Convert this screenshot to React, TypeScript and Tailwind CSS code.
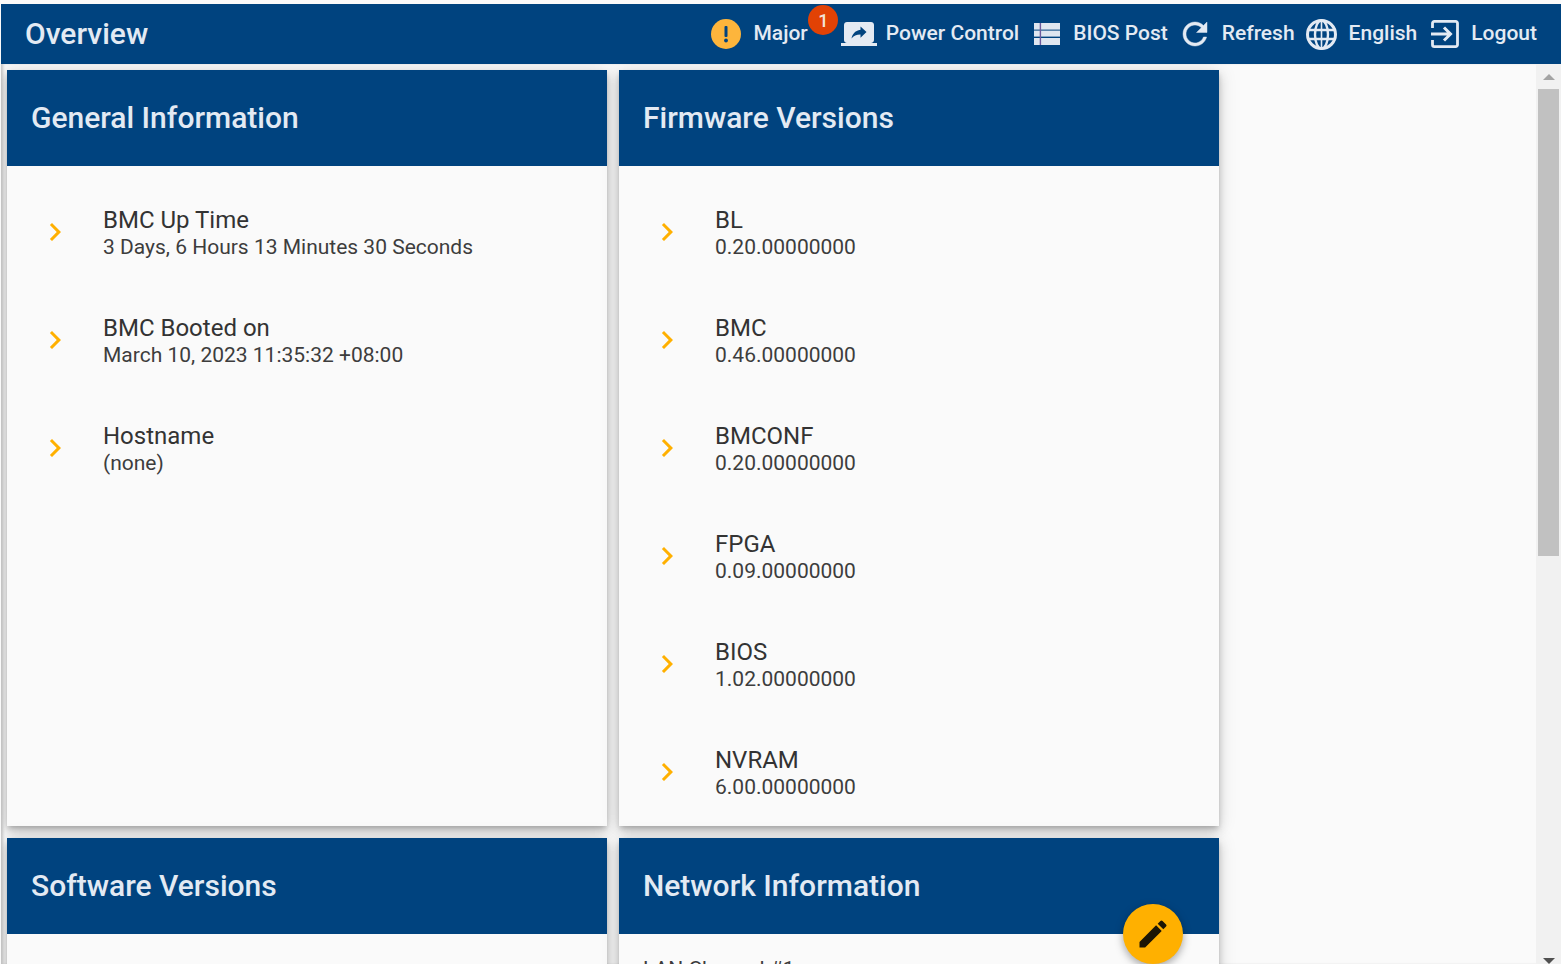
const Arrow = () => (
  <svg viewBox="0 0 24 24" className="w-[36px] h-[36px] shrink-0" fill="#ffb000">
    <path d="M10 6 8.59 7.41 13.17 12l-4.58 4.59L10 18l6-6z" />
  </svg>
);

const Row = ({ a, b }: { a: string; b: string }) => (
  <div className="h-[108px] flex items-center pl-[30px]">
    <Arrow />
    <div className="ml-[30px] pt-[2px]">
      <div className="text-[24px] leading-[28px] text-[#333333]">{a}</div>
      <div className="text-[21px] leading-[26px] text-[#3d3d3d]">{b}</div>
    </div>
  </div>
);

const Card = ({ title, children, h }: { title: string; children?: React.ReactNode; h: string }) => (
  <section className={`w-[600px] ${h} bg-[#fafafa] shadow-[0_3px_5px_-1px_rgba(0,0,0,0.2),0_6px_10px_0_rgba(0,0,0,0.14),0_1px_18px_0_rgba(0,0,0,0.12)] shrink-0`}>
    <h2 className="h-[96px] bg-[#00437f] text-[#e3eaf3] text-[30px] font-medium flex items-center pl-[24px] pb-[2px]">{title}</h2>
    {children}
  </section>
);

const Label = ({ text, ml }: { text: string; ml: string }) => (
  <span className={`${ml} text-[21px] font-medium text-[#e3eaf3]`}>{text}</span>
);

export default function App() {
  return (
    <div className="h-[964px] w-[1561px] overflow-hidden bg-[#fafafa] pt-[4px] pl-[1px] flex flex-col font-['Roboto',sans-serif]">
      <header className="h-[60px] shrink-0 bg-[#00437f] flex items-center pl-[24px] pr-[24px] justify-between">
        <h1 className="text-[30px] font-medium text-[#e3eaf3] pb-[2px]">Overview</h1>
        <div className="flex items-center">
          <div className="relative flex items-center">
            <svg viewBox="0 0 30 30" className="w-[30px] h-[30px]">
              <circle cx="15" cy="15" r="15" fill="#fdb53c" />
              <rect x="13.5" y="7" width="3" height="11" rx="1" fill="#00437f" />
              <circle cx="15" cy="21.5" r="1.9" fill="#00437f" />
            </svg>
            <Label text="Major" ml="ml-[12px]" />
            <span className="absolute left-[97px] top-[-13px] w-[30px] h-[30px] rounded-full bg-[#e24205] text-[#f3e3d8] text-[18px] font-medium flex items-center justify-center">1</span>
          </div>
          <div className="ml-[33px] flex items-center">
            <svg viewBox="0 0 24 24" className="w-[36px] h-[36px]" fill="#e3eaf3"><path d="M20 18c1.1 0 1.99-.9 1.99-2L22 6c0-1.11-.9-2-2-2H4c-1.11 0-2 .89-2 2v10c0 1.1.89 2 2 2H0v2h24v-2h-4zm-7-3.53v-2.19c-2.78 0-4.61.85-6 2.72.56-2.67 2.11-5.33 6-5.87V7l4 3.73-4 3.74z" /></svg>
            <Label text="Power Control" ml="ml-[9px]" />
          </div>
          <div className="ml-[15px] flex items-center">
            <svg viewBox="0 0 26 22" className="w-[26px] h-[22px]" fill="#dfe6f0">
              <rect x="0" y="0" width="26" height="6.6" />
              <rect x="0" y="7.6" width="26" height="6" />
              <rect x="0" y="15" width="26" height="7" />
              <rect x="5.7" y="0" width="1.4" height="22" fill="#6c5a9c" />
            </svg>
            <Label text="BIOS Post" ml="ml-[13px]" />
          </div>
          <div className="ml-[9px] flex items-center">
            <svg viewBox="0 0 24 24" className="w-[36px] h-[36px]" fill="#e3eaf3" stroke="#e3eaf3" strokeWidth="0.3"><path d="M17.65 6.35C16.2 4.9 14.21 4 12 4c-4.42 0-7.99 3.58-7.99 8s3.57 8 7.99 8c3.73 0 6.84-2.55 7.73-6h-2.08c-.82 2.33-3.04 4-5.65 4-3.31 0-6-2.69-6-6s2.69-6 6-6c1.66 0 3.14.69 4.22 1.78L13 11h7V4l-2.35 2.35z" /></svg>
            <Label text="Refresh" ml="ml-[9px]" />
          </div>
          <div className="ml-[11px] flex items-center">
            <svg viewBox="0 0 31 31" className="w-[31px] h-[31px]" fill="none" stroke="#e3eaf3" strokeWidth="3">
              <circle cx="15.5" cy="15.5" r="14" />
              <ellipse cx="15.5" cy="15.5" rx="6.5" ry="14" strokeWidth="2.4" />
              <path d="M2 11h27M2 20h27" strokeWidth="2.4" />
              <path d="M15.5 2v27" strokeWidth="1.6" />
            </svg>
            <Label text="English" ml="ml-[12px]" />
          </div>
          <div className="ml-[14px] flex items-center">
            <svg viewBox="0 0 28 28" className="w-[28px] h-[28px]" fill="none" stroke="#e3eaf3" strokeWidth="2.8">
              <path d="M1.5 8V3.2a1.8 1.8 0 0 1 1.8-1.8h21.4a1.8 1.8 0 0 1 1.8 1.8v21.6a1.8 1.8 0 0 1-1.8 1.8H3.3a1.8 1.8 0 0 1-1.8-1.8V20" />
              <path d="M0 14h19.5M13 7.5l6.5 6.5-6.5 6.5" strokeWidth="3" />
            </svg>
            <Label text="Logout" ml="ml-[12px]" />
          </div>
        </div>
      </header>

      <div className="flex-1 min-h-0 flex relative">
        <main className="flex-1 min-w-0 overflow-hidden shadow-[inset_3px_0_3px_-1px_rgba(0,0,0,0.2)]">
          <div className="flex gap-[12px] pl-[6px] pt-[6px]">
            <Card title="General Information" h="h-[756px]">
              <div className="pt-[12px]">
                <Row a="BMC Up Time" b="3 Days, 6 Hours 13 Minutes 30 Seconds" />
                <Row a="BMC Booted on" b="March 10, 2023 11:35:32 +08:00" />
                <Row a="Hostname" b="(none)" />
              </div>
            </Card>
            <Card title="Firmware Versions" h="h-[756px]">
              <div className="pt-[12px]">
                <Row a="BL" b="0.20.00000000" />
                <Row a="BMC" b="0.46.00000000" />
                <Row a="BMCONF" b="0.20.00000000" />
                <Row a="FPGA" b="0.09.00000000" />
                <Row a="BIOS" b="1.02.00000000" />
                <Row a="NVRAM" b="6.00.00000000" />
              </div>
            </Card>
          </div>
          <div className="flex gap-[12px] pl-[6px] pt-[12px]">
            <Card title="Software Versions" h="h-[400px]" />
            <Card title="Network Information" h="h-[400px]">
              <div className="pl-[24px] pt-[20px] text-[21px] text-[#3d3d3d]">LAN Channel #1</div>
            </Card>
          </div>
        </main>
        <div className="w-[25px] shrink-0 bg-[#f1f1f1] flex flex-col items-center">
          <div className="h-[25px] flex items-center justify-center">
            <div className="w-0 h-0 border-x-[6px] border-x-transparent border-b-[6px] border-b-[#a3a3a3]" />
          </div>
          <div className="w-[21px] h-[467px] bg-[#c1c1c1]" />
          <div className="mt-auto h-[8px] flex items-end">
            <div className="w-0 h-0 border-x-[6px] border-x-transparent border-t-[6px] border-t-[#505050]" />
          </div>
        </div>
        <button className="absolute left-[1122px] top-[840px] w-[60px] h-[60px] rounded-full bg-[#ffb000] shadow-[0_3px_8px_rgba(0,0,0,0.35)] flex items-center justify-center">
          <svg viewBox="0 0 24 24" className="w-[36px] h-[36px]" fill="#1c1505"><path d="M3 17.25V21h3.75L17.81 9.94l-3.75-3.75L3 17.25zM20.71 7.04a.996.996 0 0 0 0-1.41l-2.34-2.34a.996.996 0 0 0-1.41 0l-1.83 1.83 3.75 3.75 1.83-1.83z" /></svg>
        </button>
      </div>
    </div>
  );
}
